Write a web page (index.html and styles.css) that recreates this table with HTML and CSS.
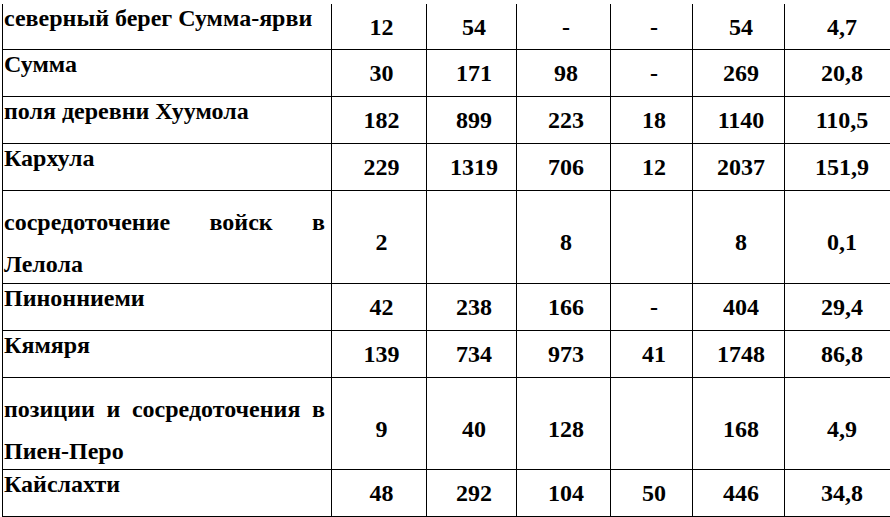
FILE: index.html
```html
<!DOCTYPE html>
<html>
<head>
<meta charset="utf-8">
<title>Таблица</title>
<link rel="stylesheet" href="styles.css">
</head>
<body>
<div class="losses">
  <div class="row row-first">
    <p class="cell name">северный берег Сумма-ярви</p>
    <p class="cell num">12</p><p class="cell num">54</p><p class="cell num">-</p><p class="cell num">-</p><p class="cell num">54</p><p class="cell num">4,7</p>
  </div>
  <div class="row">
    <p class="cell name">Сумма</p>
    <p class="cell num">30</p><p class="cell num">171</p><p class="cell num">98</p><p class="cell num">-</p><p class="cell num">269</p><p class="cell num">20,8</p>
  </div>
  <div class="row">
    <p class="cell name">поля деревни Хуумола</p>
    <p class="cell num">182</p><p class="cell num">899</p><p class="cell num">223</p><p class="cell num">18</p><p class="cell num">1140</p><p class="cell num">110,5</p>
  </div>
  <div class="row">
    <p class="cell name">Кархула</p>
    <p class="cell num">229</p><p class="cell num">1319</p><p class="cell num">706</p><p class="cell num">12</p><p class="cell num">2037</p><p class="cell num">151,9</p>
  </div>
  <div class="row row-tall">
    <p class="cell name"><span class="just">сосредоточение войск в</span><span class="tail">Лелола</span></p>
    <p class="cell num">2</p><p class="cell num"></p><p class="cell num">8</p><p class="cell num"></p><p class="cell num">8</p><p class="cell num">0,1</p>
  </div>
  <div class="row">
    <p class="cell name">Пинонниеми</p>
    <p class="cell num">42</p><p class="cell num">238</p><p class="cell num">166</p><p class="cell num">-</p><p class="cell num">404</p><p class="cell num">29,4</p>
  </div>
  <div class="row">
    <p class="cell name">Кямяря</p>
    <p class="cell num">139</p><p class="cell num">734</p><p class="cell num">973</p><p class="cell num">41</p><p class="cell num">1748</p><p class="cell num">86,8</p>
  </div>
  <div class="row row-tall row-tall-b">
    <p class="cell name"><span class="just">позиции и сосредоточения в</span><span class="tail">Пиен-Перо</span></p>
    <p class="cell num">9</p><p class="cell num">40</p><p class="cell num">128</p><p class="cell num"></p><p class="cell num">168</p><p class="cell num">4,9</p>
  </div>
  <div class="row">
    <p class="cell name">Кайслахти</p>
    <p class="cell num">48</p><p class="cell num">292</p><p class="cell num">104</p><p class="cell num">50</p><p class="cell num">446</p><p class="cell num">34,8</p>
  </div>
</div>
</body>
</html>
```
FILE: styles.css
```css
body {
  margin: 0;
  font-size: 24px;
}

.losses {
  display: flex;
  flex-direction: column;
  width: 888px;
  margin: 4px 0 0 2px;
  border-left: 1px solid #000;
}

.row {
  display: grid;
  grid-template-columns: 329px 95px 90px 94px 82px 92px 106px;
  height: 47px;
  box-sizing: border-box;
  border-bottom: 1px solid #000;
}

.row-first { height: 46px; }
.row-tall { height: 93px; }
.row-tall-b { height: 92px; }

.cell {
  margin: 0;
  font-family: "Liberation Serif";
  font-weight: 700;
  font-size: 24px;
  box-sizing: border-box;
  border-right: 1px solid #000;
  min-width: 0;
}

.cell:last-child {
  border-right: none;
  padding-left: 8px;
}

.name {
  text-align: left;
  line-height: 28px;
  padding: 0 6px 0 1px;
  white-space: nowrap;
}

.row-tall .name {
  line-height: 42px;
  padding-top: 10px;
  white-space: normal;
}

.just {
  display: block;
  text-align: justify;
  text-align-last: justify;
}

.tail {
  display: block;
}

.num {
  display: flex;
  align-items: center;
  justify-content: center;
  line-height: 26px;
  padding: 0 0 0 5px;
}

.row-tall .num {
  padding-top: 8px;
}
```
